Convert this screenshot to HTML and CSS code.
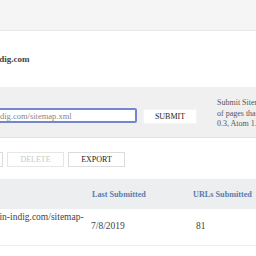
FILE: index.html
```html
<!DOCTYPE html>
<html lang="en">
<head>
  <meta charset="UTF-8">
  <title>Sitemaps</title>
  <link rel="stylesheet" href="styles.css">
</head>
<body>
  <div class="topbar"></div>

  <div class="site">
    <span class="site-name">https://www.kevin-indig.com</span>
  </div>

  <div class="submit-band">
    <input class="sitemap-input" type="text" value="https://www.kevin-indig.com/sitemap.xml">
    <button class="btn submit">SUBMIT</button>
    <p class="hint">
      Submit Sitemaps to let Bing know about all the kinds<br>
      of pages that are on your site: XML, RSS 2.0, mRSS, RSS<br>
      0.3, Atom 1.0 and text formats are supported
    </p>
  </div>

  <div class="actions">
    <button class="btn resubmit">RESUBMIT</button>
    <button class="btn" disabled>DELETE</button>
    <button class="btn">EXPORT</button>
  </div>

  <div class="grid thead">
    <div class="cell">Sitemap</div>
    <div class="cell">Last Submitted</div>
    <div class="cell">URLs Submitted</div>
  </div>
  <div class="grid row">
    <div class="cell url">https://www.kevin-indig.com/sitemap-<br>index.xml</div>
    <div class="cell date">7/8/2019</div>
    <div class="cell count">81</div>
  </div>
</body>
</html>
```

FILE: styles.css
```css
body {
  margin: 0;
  font-family: "Liberation Serif", "Times New Roman", serif;
  color: #333;
  background: #fff;
  overflow: hidden;
}
.topbar {
  height: 30px;
  background: #f5f5f5;
  border-bottom: 1px solid #e8e8e8;
}
.site {
  height: 56px;
  display: flex;
  align-items: center;
}
.site-name {
  margin-left: -81px;
  font-size: 9px;
  font-weight: bold;
  color: #444;
  white-space: nowrap;
}
.submit-band {
  height: 50px;
  background: #f0f0f0;
  border-bottom: 1px solid #e4e4e4;
  display: flex;
  align-items: flex-start;
}
.sitemap-input {
  margin: 21px 0 0 -77px;
  width: 214px;
  height: 15px;
  box-sizing: border-box;
  padding: 0 3px;
  border: 2px solid #7486cf;
  border-radius: 2px;
  font-family: inherit;
  font-size: 8.5px;
  color: #888;
  background: #fff;
  flex-shrink: 0;
  outline: none;
}
.btn {
  height: 15px;
  box-sizing: border-box;
  padding: 0;
  border: 1px solid #dcdcdc;
  background: #fff;
  font-family: inherit;
  font-size: 8px;
  color: #222;
  flex-shrink: 0;
}
.btn:disabled {
  color: #c8c8c8;
  border-color: #e6e6e6;
}
.submit {
  margin: 22px 0 0 6px;
  width: 54px;
  border-color: #f4f4f4;
}
.hint {
  margin: 11px 0 0 20px;
  font-size: 8px;
  line-height: 10.5px;
  color: #555;
  white-space: nowrap;
}
.actions {
  height: 41px;
  display: flex;
  align-items: flex-start;
  gap: 4px;
}
.actions .btn {
  margin-top: 14px;
  width: 57px;
}
.actions .resubmit {
  margin-left: -54px;
}
.grid {
  display: grid;
  grid-template-columns: 154px 102px 1fr;
  margin-left: -63px;
}
.thead {
  height: 30px;
  background: #eceef0;
  align-items: center;
  font-size: 8.2px;
  font-weight: bold;
  color: #5a7dad;
}
.thead .cell:nth-child(2) {
  padding-left: 1px;
}
.row {
  height: 36px;
  border-bottom: 1px solid #ececec;
  align-items: start;
  font-size: 9.5px;
  line-height: 11px;
  color: #444;
}
.url {
  padding-top: 3px;
}
.date {
  padding-top: 12px;
}
.count {
  padding: 12px 0 0 3px;
}
```
